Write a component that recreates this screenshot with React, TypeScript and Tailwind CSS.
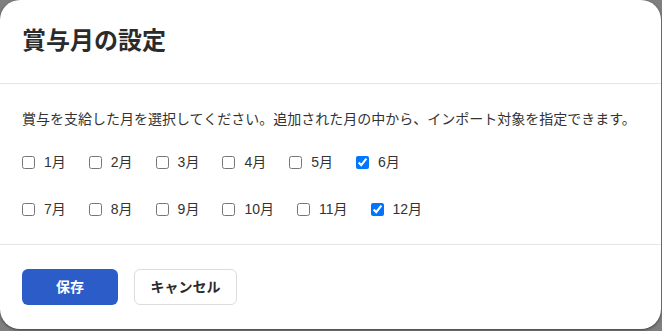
import React from "react";

const months = [
  ["1月", "2月", "3月", "4月", "5月", "6月"],
  ["7月", "8月", "9月", "10月", "11月", "12月"],
];
const checked = new Set(["6月", "12月"]);

export default function App() {
  return (
    <div
      className="w-[662px] h-[331px] bg-[#7f7f7f] overflow-hidden"
      style={{ fontFamily: '"Liberation Sans", "Noto Sans CJK JP", sans-serif' }}
    >
      <div className="w-[661px] h-[329px] bg-white rounded-[20px] shadow-[0_1px_3px_rgba(0,0,0,0.5)] flex flex-col">
        <div className="h-[84px] px-[22px] flex items-center border-b border-[#e6e6e6]">
          <h1 className="text-[24px] leading-[30px] font-bold text-[#2b2b2b] pb-[2px]">賞与月の設定</h1>
        </div>
        <div className="px-[22px] pt-[25px] pb-[25px] flex flex-col border-b border-[#e6e6e6]">
          <p className="text-[14px] leading-[20px] text-[#333]">
            賞与を支給した月を選択してください。追加された月の中から、インポート対象を指定できます。
          </p>
          <div className="mt-[23px] flex flex-col gap-[27px]">
            {months.map((row, i) => (
              <div key={i} className="flex items-center gap-[23px] h-[20px]">
                {row.map((m) => (
                  <label key={m} className="flex items-center gap-[9px] text-[14px] leading-[20px] text-[#333]">
                    <input
                      type="checkbox"
                      defaultChecked={checked.has(m)}
                      className="w-[13px] h-[13px] m-0"
                    />
                    <span>{m}</span>
                  </label>
                ))}
              </div>
            ))}
          </div>
        </div>
        <div className="px-[22px] pt-[24px] flex gap-[16px]">
          <button className="w-[96px] h-[36px] rounded-[6px] bg-[#2b5cc8] text-white text-[14px] font-bold">
            保存
          </button>
          <button className="w-[103px] h-[36px] rounded-[6px] bg-white border border-[#dcdcdc] text-[#2b2b2b] text-[14px] font-bold">
            キャンセル
          </button>
        </div>
      </div>
    </div>
  );
}
